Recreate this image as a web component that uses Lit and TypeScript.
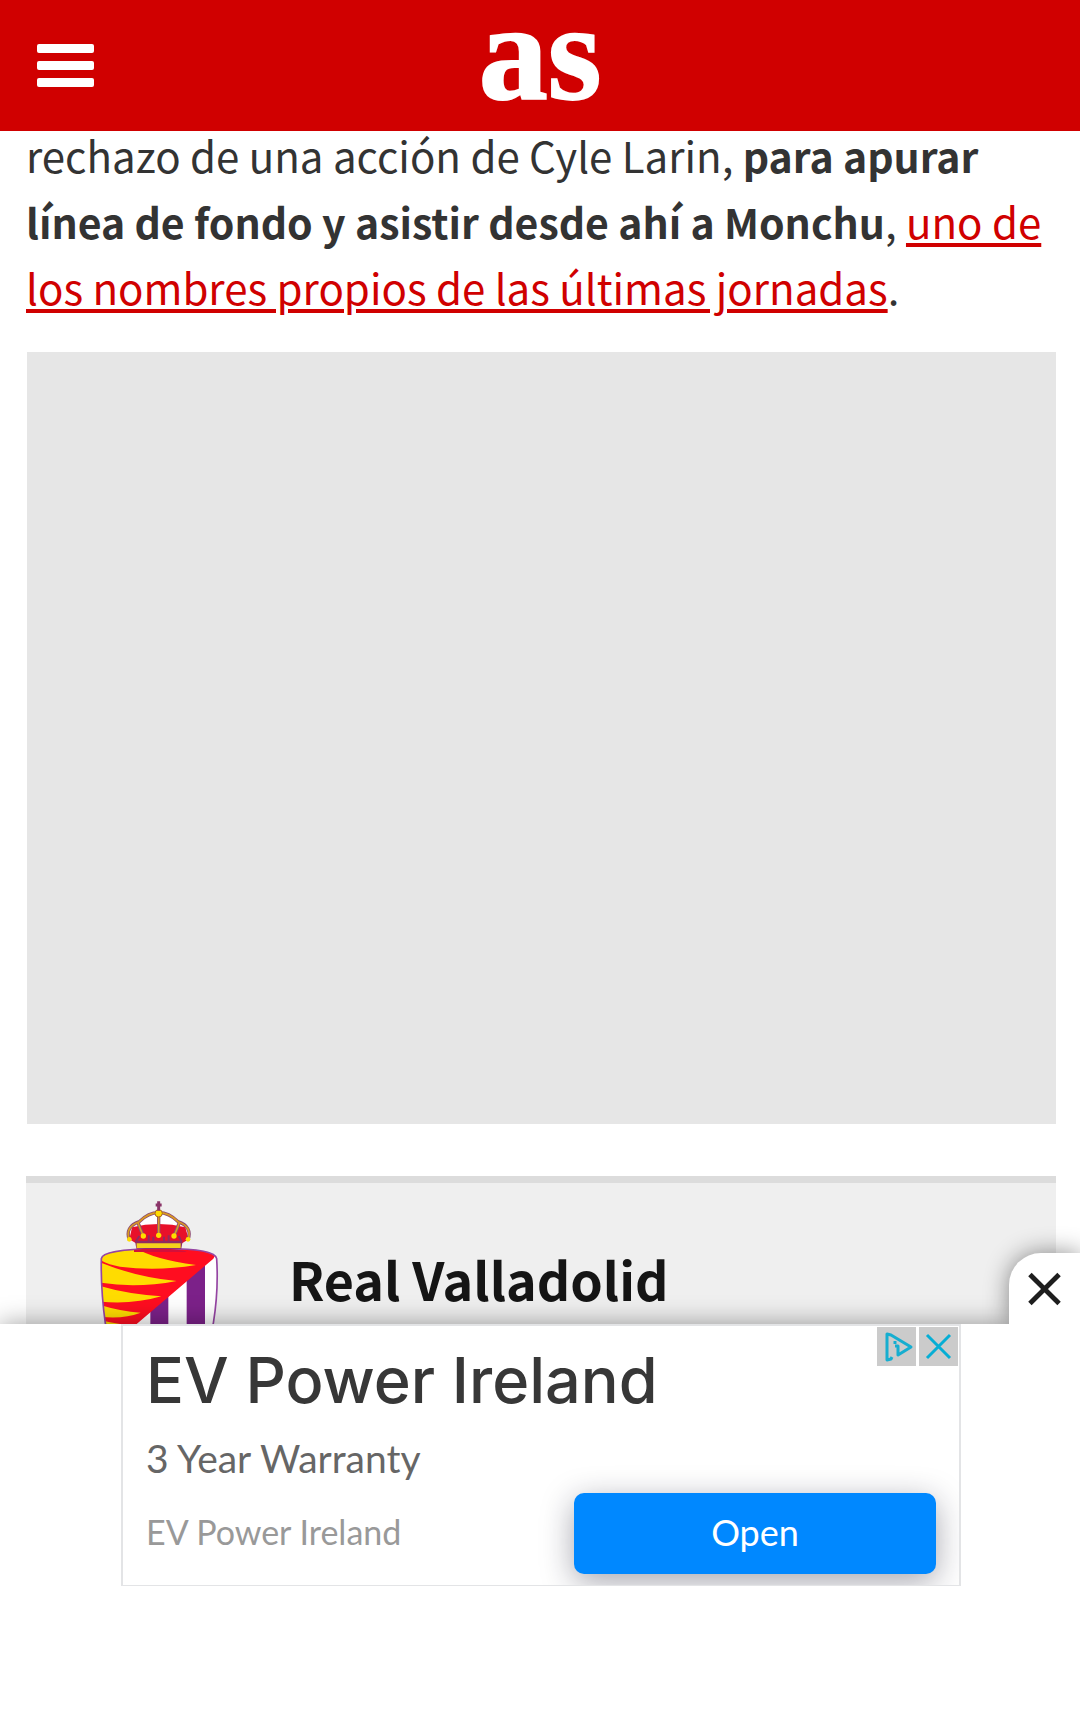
import { LitElement, html, css } from "lit";
import { customElement, property } from "lit/decorators.js";

@customElement("site-header")
class SiteHeader extends LitElement {
  static styles = css`
    :host {
      display: block;
      position: relative;
      z-index: 2;
    }
    .bar {
      display: grid;
      grid-template-columns: 1fr auto 1fr;
      align-items: center;
      height: 131px;
      padding: 0 37px;
      background: #d00000;
    }
    .menu {
      justify-self: start;
      display: flex;
      padding: 0;
      border: 0;
      background: none;
      cursor: pointer;
    }
    .logo {
      margin-bottom: 26px;
      color: #fff;
      font: bold 138px/100px "Liberation Serif", serif;
      -webkit-text-stroke: 2px #fff;
      text-decoration: none;
    }
  `;
  render() {
    return html`
      <header class="bar">
        <button class="menu" aria-label="Menú">
          <svg width="58" height="44" viewBox="0 0 58 44" fill="#fff" aria-hidden="true">
            <rect x="0" y="0" width="57" height="9" rx="2" />
            <rect x="0" y="17" width="57" height="9" rx="2" />
            <rect x="0" y="34" width="57" height="9" rx="2" />
          </svg>
        </button>
        <a class="logo" href="#">as</a>
      </header>
    `;
  }
}

@customElement("team-crest")
class TeamCrest extends LitElement {
  static styles = css`
    :host {
      display: block;
    }
    .crest {
      display: block;
    }
  `;
  render() {
    return html`
      <svg class="crest" width="126" height="170" viewBox="48 57 378 510" aria-hidden="true">
        <defs>
          <clipPath id="shield">
            <path d="M64 236Q66 208 236 206T410 236Q416 330 400 430Q370 520 236 560Q102 520 76 430Q62 330 64 236Z" />
          </clipPath>
        </defs>
        <g clip-path="url(#shield)">
          <path d="M50 200H426V567H50Z" fill="#fff" />
          <path d="M211 300H265V567H211ZM320 200H375V567H320Z" fill="#7c2189" />
          <path d="M50 200H420L400 236L170 432L76 520H50Z" fill="#ff0d20" />
          <path d="M60 200H162Q210 236 348 255Q230 275 120 260Q85 254 60 240ZM60 247Q170 292 290 303Q170 326 60 308ZM60 318Q140 342 244 349Q160 374 60 365ZM60 375Q120 394 182 398Q130 418 60 410ZM60 420Q90 428 120 432L80 470H60Z" fill="#ffdc00" />
        </g>
        <path d="M64 236Q66 208 236 206T410 236Q416 330 400 430Q370 520 236 560Q102 520 76 430Q62 330 64 236Z" fill="none" stroke="#9545a3" stroke-width="5" />
        <path d="M162 210Q236 200 315 213L320 216L162 216Z" fill="#d4103a" />
        <path d="M146 178Q138 140 180 126Q205 98 236 98T292 126Q336 140 328 178Z" fill="#fff" />
        <path d="M148 178L156 142Q195 132 236 132T316 142L326 178L306 190H168Z" fill="#e8102a" />
        <path d="M165 182H308L304 206H169Z" fill="#8f2b62" />
        <path d="M170 190H302V204H170Z" fill="#f5d21c" />
        <g fill="none" stroke="#8c4a72" stroke-width="10">
          <path d="M148 180Q134 140 178 125Q205 98 236 98T294 125Q338 140 324 180" />
          <path d="M190 168Q180 145 174 128M236 100V168M282 168Q292 145 298 128" />
        </g>
        <g fill="none" stroke="#d99b22" stroke-width="5">
          <path d="M148 180Q134 140 178 125Q205 98 236 98T294 125Q338 140 324 180" />
          <path d="M190 168Q180 145 174 128M236 100V168M282 168Q292 145 298 128" />
        </g>
        <g fill="#ffdc00">
          <circle cx="148" cy="178" r="7" />
          <circle cx="190" cy="168" r="8" />
          <circle cx="236" cy="166" r="8" />
          <circle cx="282" cy="168" r="8" />
          <circle cx="324" cy="178" r="7" />
          <circle cx="236" cy="100" r="11" stroke="#a8661f" stroke-width="3" />
        </g>
        <path d="M168 184L178 168M206 184V166M220 184V170M252 184V170M266 184V166M304 184L296 168" stroke="#8f2b62" stroke-width="6" />
        <path d="M236 64V92M227 75H245" stroke="#8a3468" stroke-width="9" />
      </svg>
    `;
  }
}

@customElement("team-card")
class TeamCard extends LitElement {
  static styles = css`
    :host {
      display: block;
    }
    .card {
      display: flex;
      align-items: flex-start;
      gap: 67px;
      padding: 16px 70px;
      border-top: 7px solid #dcdcdc;
      background: #efefef;
    }
    .name {
      margin: 44px 0 0;
      color: #151515;
      font-size: 52px;
      line-height: 72px;
      font-weight: 700;
    }
  `;
  @property() name = "";
  render() {
    return html`
      <section class="card">
        <team-crest></team-crest>
        <h2 class="name">${this.name}</h2>
      </section>
    `;
  }
}

@customElement("ad-banner")
class AdBanner extends LitElement {
  static styles = css`
    :host {
      display: block;
      position: relative;
      z-index: 1;
      background: #fff;
      box-shadow: 0 0 24px rgba(0, 0, 0, 0.38);
      font-family: Lato, sans-serif;
    }
    .close {
      position: absolute;
      right: 0;
      bottom: 100%;
      display: flex;
      width: 71px;
      height: 71px;
      padding: 19px;
      box-sizing: border-box;
      border: 0;
      border-radius: 32px 0 0 0;
      background: #fff;
      box-shadow: 0 0 24px rgba(0, 0, 0, 0.45);
      clip-path: inset(-40px 0 0 -40px);
      cursor: pointer;
    }
    .slot {
      padding: 0 0 145px 2px;
    }
    .ad {
      position: relative;
      display: grid;
      grid-template-columns: 1fr 362px;
      grid-template-rows: 101px 55px 81px;
      width: 840px;
      max-width: 100%;
      margin: 0 auto;
      padding: 11px 23px 11px 23px;
      box-sizing: border-box;
      border: 2px solid #e3e4e6;
      border-bottom-width: 1px;
      overflow: hidden;
    }
    .title {
      grid-column: 1 / -1;
      margin: 0;
      color: #373737;
      font-family: Inter, sans-serif;
      font-size: 63px;
      line-height: 86px;
      font-weight: 500;
    }
    .tagline {
      grid-column: 1 / -1;
      margin: 0;
      color: #666;
      font-size: 39px;
      line-height: 40px;
    }
    .brand {
      align-self: center;
      margin-bottom: 4px;
      color: #999;
      font-size: 34px;
      line-height: 40px;
    }
    .open {
      display: flex;
      align-items: center;
      justify-content: center;
      padding-bottom: 3px;
      border-radius: 10px;
      background: #0088ff;
      box-shadow: 0 8px 32px rgba(20, 20, 45, 0.38);
      color: #fff;
      font-size: 36px;
      line-height: 40px;
      text-decoration: none;
    }
    .choices {
      position: absolute;
      top: 1px;
      right: 1px;
      display: flex;
      gap: 3px;
    }
    .choice {
      display: flex;
      padding: 0;
      border: 0;
      background: #cbcbcb;
      cursor: pointer;
    }
  `;
  render() {
    return html`
      <button class="close" aria-label="Cerrar">
        <svg width="34" height="34" viewBox="0 0 34 34" aria-hidden="true">
          <path d="M2 2L32 32M32 2L2 32" stroke="#1e1e1e" stroke-width="5" />
        </svg>
      </button>
      <aside class="slot">
        <div class="ad">
          <h3 class="title">EV Power Ireland</h3>
          <p class="tagline">3 Year Warranty</p>
          <span class="brand">EV Power Ireland</span>
          <a class="open" href="#">Open</a>
          <div class="choices">
            <button class="choice" aria-label="AdChoices">
              <svg width="39" height="39" viewBox="0 0 39 39" fill="none" stroke="#16aed0" stroke-width="3" stroke-linejoin="round" aria-hidden="true">
                <path d="M15 30L14 32L10 33V7L14 8L34 20L21 28V19H18" />
                <path d="M18 14V17" />
              </svg>
            </button>
            <button class="choice" aria-label="Cerrar anuncio">
              <svg width="39" height="39" viewBox="0 0 39 39" aria-hidden="true">
                <path d="M8 8L31 31M31 8L8 31" stroke="#06aed5" stroke-width="3" />
              </svg>
            </button>
          </div>
        </div>
      </aside>
    `;
  }
}

@customElement("app-root")
class AppRoot extends LitElement {
  static styles = css`
    :host {
      display: flex;
      flex-direction: column;
      height: 100vh;
      overflow: hidden;
      background: #fff;
      color: #333;
      font-family: "Noto Sans CJK SC", "Noto Sans", sans-serif;
    }
    .article {
      flex: 1;
      min-height: 0;
      padding: 0 24px 0 26px;
      overflow: hidden;
    }
    .text {
      margin: -9px 0 32px;
      font-size: 42px;
      line-height: 66px;
    }
    .strong {
      font-size: 41px;
    }
    .link {
      color: #d00000;
      text-decoration-thickness: 4px;
      text-underline-offset: 4px;
    }
    .media {
      height: 772px;
      margin: 0 0 52px 1px;
      background: #e6e6e6;
    }
  `;
  render() {
    return html`
      <site-header></site-header>
      <main class="article">
        <p class="text">
          rechazo de una acción de Cyle Larin, <strong class="strong">para apurar línea de fondo y asistir desde ahí a Monchu</strong>,
          <a class="link" href="#">uno de los nombres propios de las últimas jornadas</a>.
        </p>
        <div class="media"></div>
        <team-card name="Real Valladolid"></team-card>
      </main>
      <ad-banner></ad-banner>
    `;
  }
}
